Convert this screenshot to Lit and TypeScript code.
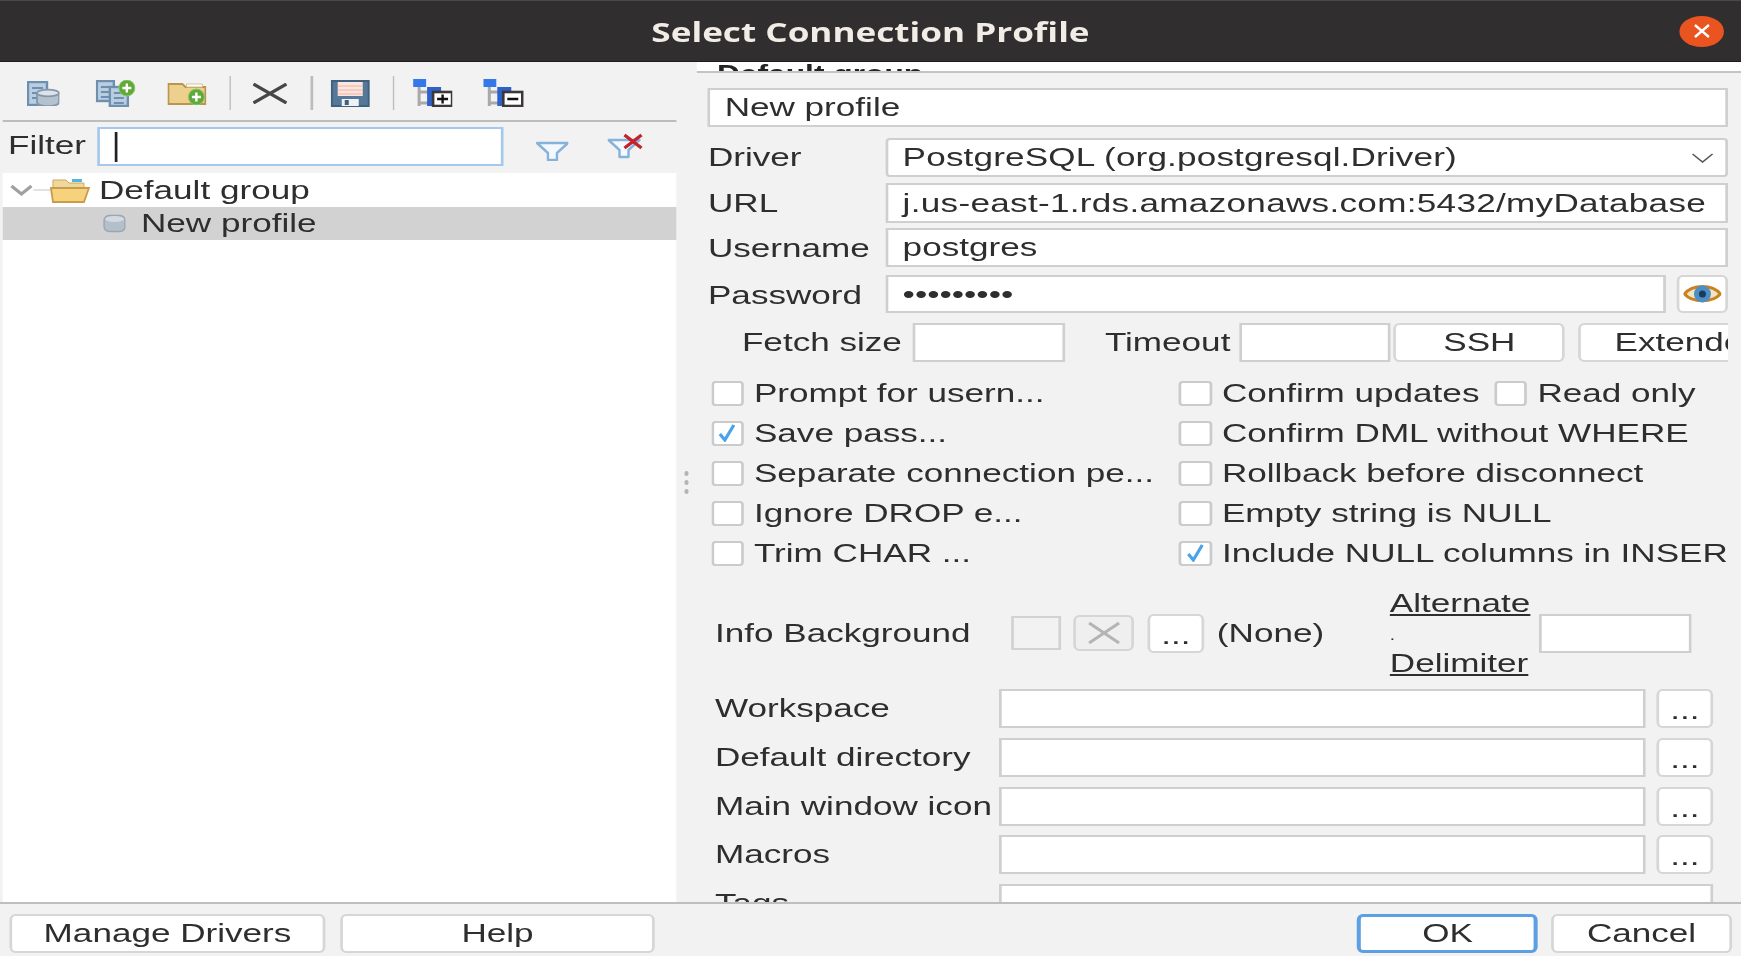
import { LitElement, html, css, svg, unsafeCSS } from 'lit';
import { customElement } from 'lit/decorators.js';

// the reference is stretched sideways, so the whole stage is laid out narrow and scaled back up
const SX = 1.35;
const x = (n: number) => unsafeCSS(`${(n / SX).toFixed(3)}px`);

const icon = (w: number, h: number, body: unknown) => html`
  <svg width=${w / SX} height=${h} viewBox="0 0 ${w} ${h}" preserveAspectRatio="none">${body}</svg>
`;

const db = (cx: number, cy: number, rx: number, h: number) => svg`
  <path d="M${cx - rx} ${cy}v${h}c0 ${rx * 0.5} ${rx * 2} ${rx * 0.5} ${rx * 2} 0v${-h}z" fill="#b4c2cf" stroke="#8597a9" stroke-width="1.8"/>
  <ellipse cx=${cx} cy=${cy} rx=${rx} ry=${rx * 0.3} fill="#dbe2e9" stroke="#8597a9" stroke-width="1.8"/>
`;

const plusBadge = (cx: number, cy: number) => svg`
  <circle cx=${cx} cy=${cy} r="8" fill="#5fa83a" stroke="#8cc96c"/>
  <path d="M${cx - 4.500} ${cy}h9M${cx} ${cy - 4.500}v9" stroke="#fff" stroke-width="2.4"/>
`;

const doc = (dx: number, dy: number, w: number, h: number) => svg`
  <rect x=${dx} y=${dy} width=${w} height=${h} fill="#b9cee1" stroke="#6f8fae" stroke-width="2.4"/>
  <path d="M${dx + 4} ${dy + 6}h${w - 8}M${dx + 4} ${dy + 11}h${w - 8}M${dx + 4} ${dy + 16}h${w - 8}" stroke="#6f8fae" stroke-width="1.8"/>
`;

const treeIcon = (minus: boolean) => svg`
  <rect x="0" y="0" width="13" height="8" fill="#3478ea"/>
  <path d="M6 8v19M6 13h10M6 24h10" stroke="#a9a9a9" stroke-width="3"/>
  <rect x="14" y="8" width="14" height="10" fill="#2f62c8"/>
  <rect x="14" y="18" width="14" height="9" fill="#2f62c8"/>
  <rect x="20" y="13" width="19" height="14" fill="#fff" stroke="#3c3838" stroke-width="2.6"/>
  <path d=${minus ? 'M24 20h11' : 'M24 20h11M29.5 15.500v9'} stroke="#111" stroke-width="2.4"/>
`;

const filterShape = svg`<path d="M1 2h31l-11 10v7h-9v-7z" fill="#f4f8fc" stroke="#86b2dc" stroke-width="2.4" stroke-linejoin="round"/>`;

const TOOLBAR = [
  {
    left: 24, w: 33, h: 25,
    body: svg`${doc(1, 1, 19, 23)}${db(21, 12, 11, 9)}`,
  },
  {
    left: 36, w: 40, h: 27,
    body: svg`${doc(1, 1, 17, 20)}${doc(14, 7, 18, 19)}${plusBadge(31, 8)}`,
  },
  {
    left: 32, w: 39, h: 24,
    body: svg`
      <path d="M1 3h14l3 3h20v17H1z" fill="#edcf8e" stroke="#b8964c" stroke-width="1.8"/>
      <path d="M19 3h16v3H19z" fill="#fff" stroke="#d6c190"/>
      ${plusBadge(29, 16)}`,
  },
  { sep: true, left: 22 },
  {
    left: 21, w: 35, h: 21,
    body: svg`<path d="M1 1l33 19M34 1L1 20" stroke="#474747" stroke-width="3.200"/>`,
  },
  { sep: true, left: 24 },
  {
    left: 18, w: 39, h: 27,
    body: svg`
      <path d="M1 1h37v25H1z" fill="#557899" stroke="#41607c" stroke-width="2"/>
      <rect x="7" y="2" width="25" height="14" fill="#fbe5de"/>
      <path d="M7 6h25M7 10h25M7 14h25" stroke="#f0b3a4" stroke-width="1"/>
      <rect x="11" y="19" width="17" height="7" fill="#eef2f5"/>
      <rect x="14" y="20" width="4" height="5" fill="#41607c"/>`,
  },
  { sep: true, left: 23 },
  { left: 18, w: 40, h: 28, body: treeIcon(false) },
  { left: 31, w: 40, h: 28, body: treeIcon(true) },
];

const CHECKS = [
  ['Prompt for usern...', false, 'Confirm updates', false],
  ['Save pass...', true, 'Confirm DML without WHERE', false],
  ['Separate connection pe...', false, 'Rollback before disconnect', false],
  ['Ignore DROP e...', false, 'Empty string is NULL', false],
  ['Trim CHAR ...', false, 'Include NULL columns in INSERT', true],
] as const;

@customElement('app-root')
export class AppRoot extends LitElement {
  static styles = css`
    :host {
      display: block;
      width: 1741px;
      height: 956px;
      overflow: hidden;
      background: #f2f2f2;
    }
    .stage {
      width: ${x(1741)};
      height: 956px;
      transform: scaleX(${SX});
      transform-origin: 0 0;
      filter: blur(0.45px);
      display: flex;
      flex-direction: column;
      font: 26px 'Liberation Sans', Arial, sans-serif;
      color: #2e2e2e;
      white-space: nowrap;
      background: #f2f2f2;
    }

    .titlebar {
      height: 62px;
      flex: none;
      display: grid;
      grid-template-columns: 1fr auto 1fr;
      align-items: center;
      background: #302e2e;
      border-top: 1px solid #4a4848;
      box-sizing: border-box;
      border-bottom: 1px solid #1e1d1d;
    }
    .title {
      font: 700 26px 'Open Sans', 'Noto Sans', sans-serif;
      color: #f1ede6;
      padding-top: 2px;
    }
    .close {
      justify-self: end;
      margin-right: ${x(17)};
      width: ${x(44)};
      height: 31px;
      border-radius: 50%;
      background: #e95420;
      display: flex;
      align-items: center;
      justify-content: center;
    }

    .body {
      flex: 1;
      min-height: 0;
      display: flex;
    }
    .left {
      width: ${x(674)};
      margin-left: ${x(3)};
      flex: none;
      display: flex;
      flex-direction: column;
    }
    .toolbar {
      height: 54px;
      padding-top: 4px;
      flex: none;
      display: flex;
      align-items: center;
      border-bottom: 2px solid #bdbdbd;
      box-sizing: content-box;
    }
    .toolbar svg { flex: none; display: block; }
    .tool { flex: none; }
    .sep {
      flex: none;
      width: ${x(2)};
      height: 34px;
      background: #bcbcbc;
    }
    .filter {
      height: 51px;
      flex: none;
      display: flex;
      align-items: flex-start;
    }
    .filter-label {
      width: ${x(94)};
      padding-left: ${x(5)};
      box-sizing: border-box;
      margin-top: 9px;
      line-height: 28px;
    }
    .filter-input {
      width: ${x(407)};
      height: 39px;
      margin-top: 5px;
      box-sizing: border-box;
      background: #fff;
      border: 2px solid #a6c8ea;
      display: flex;
      align-items: center;
      padding-left: ${x(15)};
    }
    .caret {
      width: ${x(2.500)};
      height: 30px;
      background: #222;
    }
    .filter-a { margin: 15px 0 0 ${x(32)}; }
    .filter-b { margin: 11px 0 0 ${x(39)}; }
    .tree {
      flex: 1;
      background: #fff;
      line-height: 33px;
    }
    .node {
      height: 34px;
      display: flex;
      align-items: center;
    }
    .node svg { flex: none; }
    .node.group svg.chev { margin-left: ${x(7)}; }
    .node.group svg.folder { margin-left: ${x(-3)}; }
    .node.group span { margin-left: ${x(9)}; }
    .node.item { background: #d2d2d2; height: 33px; }
    .node.item svg { margin-left: ${x(99)}; }
    .node.item span { margin-left: ${x(15)}; }

    .splitter {
      width: ${x(19)};
      flex: none;
      display: flex;
      flex-direction: column;
      align-items: center;
      justify-content: center;
      gap: 4px;
    }
    .splitter i {
      width: ${x(5)};
      height: 5px;
      border-radius: 50%;
      background: #b4b4b4;
    }

    .right {
      flex: 1;
      min-width: 0;
      overflow: hidden;
      padding: 0 ${x(13)} 0 ${x(12)};
      background: #f2f2f2;
    }
    .groupname {
      height: 9px;
      margin: 0 ${x(-13)} 0 ${x(-12)};
      padding-left: ${x(21)};
      background: #fff;
      border-bottom: 2px solid #c4c4c4;
      font-weight: 700;
      font-size: 23.500px;
      line-height: 24px;
      color: #222;
      overflow: hidden;
    }

    .field {
      height: 39px;
      box-sizing: border-box;
      display: flex;
      align-items: center;
      padding-left: ${x(14)};
      background: #fff;
      border: 2px solid #cfcfcf;
      overflow: hidden;
    }
    .name { margin-top: 15px; }
    .conn {
      display: grid;
      grid-template-columns: ${x(178)} 1fr;
      align-items: center;
    }
    .combo {
      border-radius: ${x(4)} / 4px;
      justify-content: space-between;
      padding-right: ${x(12)};
    }
    .combo span { letter-spacing: 0.12px; }
    .conn-driver { margin-top: 11px; }
    .conn-url { margin-top: 6px; }
    .conn-url .field { height: 40px; letter-spacing: 0.22px; }
    .conn-user { margin-top: 5px; }
    .conn-user > span, .conn-pass > span { padding-top: 2px; }
    .conn-pass { margin-top: 8px; }
    .pass-wrap {
      display: flex;
      justify-content: space-between;
    }
    .pass-wrap .field { width: ${x(780)}; height: 38px; }
    .btn {
      box-sizing: border-box;
      background: #fff;
      border: 2px solid #d6d6d6;
      border-radius: ${x(6)} / 6px;
      display: flex;
      align-items: center;
      justify-content: center;
      color: #2e2e2e;
      flex: none;
    }
    .eye { width: ${x(51)}; height: 38px; }

    .limits {
      margin-top: 10px;
      height: 39px;
      width: ${x(1020)};
      overflow: hidden;
      display: flex;
      align-items: center;
    }
    .limits .lbl { flex: none; }
    .lbl-fetch { width: ${x(171)}; margin-left: ${x(34)}; }
    .lbl-timeout { width: ${x(134)}; margin-left: ${x(40)}; }
    .num { width: ${x(152)}; flex: none; padding: 0; }
    .ssh { width: ${x(171)}; height: 39px; margin-left: ${x(3)}; }
    .ext {
      width: ${x(300)};
      height: 39px;
      margin-left: ${x(13)};
      justify-content: flex-start;
      padding-left: ${x(34)};
    }

    .checks {
      margin-top: 11px;
      margin-left: ${x(3)};
      width: ${x(1017)};
      overflow: hidden;
      display: grid;
      grid-template-columns: ${x(468)} 1fr;
      grid-auto-rows: 40px;
      align-items: center;
    }
    .cell { display: flex; align-items: center; }
    .check {
      display: flex;
      align-items: center;
      gap: ${x(10)};
    }
    .box {
      width: ${x(33)};
      height: 25px;
      flex: none;
      box-sizing: border-box;
      background: #fff;
      border: 2px solid #cbcbcb;
      border-radius: ${x(4)} / 4px;
      display: flex;
      align-items: center;
      justify-content: center;
    }
    .readonly { margin-left: ${x(15)}; }

    .info {
      margin-top: 15px;
      padding-left: ${x(7)};
      display: flex;
      align-items: center;
      height: 90px;
    }
    .info-label { width: ${x(296)}; flex: none; }
    .swatch {
      width: ${x(50)};
      height: 34px;
      flex: none;
      box-sizing: border-box;
      border: 2px solid #d2d2d2;
      background: #f2f2f2;
    }
    .clear {
      width: ${x(60)};
      height: 36px;
      margin-left: ${x(13)};
      background: #efefef;
    }
    .pick {
      width: ${x(56)};
      height: 39px;
      margin-left: ${x(14)};
      align-items: flex-start;
      line-height: 39px;
    }
    .none { width: ${x(173)}; margin-left: ${x(13)}; flex: none; }
    .delim {
      width: ${x(149)};
      flex: none;
      display: flex;
      flex-direction: column;
      line-height: 30px;
    }
    .delim span { height: 30px; }
    .delim u { text-underline-offset: 2px; }
    .delim-dot { font-size: 14px; line-height: 34px; }
    .delim-input { width: ${x(153)}; padding: 0; flex: none; }

    .paths {
      margin-top: 11px;
      padding-left: ${x(7)};
      display: grid;
      grid-template-columns: ${x(273)} ${x(647)} ${x(56)};
      column-gap: ${x(11)};
      row-gap: 9.750px;
      align-items: center;
    }
    .paths .pick { margin: 0; }
    .wide { grid-column: 2 / 4; }

    .footer {
      height: 54px;
      flex: none;
      box-sizing: border-box;
      border-top: 2px solid #bebebe;
      padding: 10px ${x(9)} 0 ${x(10)};
      display: flex;
      align-items: flex-start;
      background: #f2f2f2;
    }
    .footer .btn { height: 39px; width: ${x(315)}; }
    .footer .help { margin-left: ${x(15)}; }
    .footer .ok {
      margin-left: auto;
      width: ${x(181)};
      border: 3px solid #5c9fe2;
    }
    .footer .cancel { width: ${x(181)}; margin-left: ${x(13)}; }
  `;

  private renderCheck(label: string, checked: boolean) {
    return html`
      <div class="check">
        <div class="box">
          ${checked
            ? icon(20, 18, svg`<path d="M3 10l5 6L17 1" fill="none" stroke="#4aa3ea" stroke-width="3.200"/>`)
            : ''}
        </div>
        <span>${label}</span>
      </div>
    `;
  }

  private renderToolbar() {
    return TOOLBAR.map((t) =>
      'sep' in t
        ? html`<div class="sep" style="margin-left:${(t.left as number) / SX}px"></div>`
        : html`<div class="tool" style="margin-left:${(t.left as number) / SX}px">
            ${icon(t.w as number, t.h as number, t.body)}
          </div>`
    );
  }

  render() {
    return html`
      <div class="stage">
        <header class="titlebar">
          <span></span>
          <span class="title">Select Connection Profile</span>
          <div class="close">
            ${icon(18, 14, svg`<path d="M2 1l14 12M16 1L2 13" stroke="#fff" stroke-width="2.4"/>`)}
          </div>
        </header>

        <div class="body">
          <section class="left">
            <div class="toolbar">${this.renderToolbar()}</div>
            <div class="filter">
              <span class="filter-label">Filter</span>
              <div class="filter-input"><div class="caret"></div></div>
              <div class="filter-a">${icon(33, 20, filterShape)}</div>
              <div class="filter-b">
                ${icon(37, 26, svg`
                  <g transform="translate(0 5)">${filterShape}</g>
                  <path d="M17 2l17 13M34 2L17 15" stroke="#c4222a" stroke-width="3.400"/>`)}
              </div>
            </div>
            <div class="tree">
              <div class="node group">
                <svg class="chev" width=${43 / SX} height="14" viewBox="0 0 43 14" preserveAspectRatio="none">
                  <path d="M2 3l10 8L22 3" fill="none" stroke="#a0a0a0" stroke-width="3.200"/>
                  <path d="M24 7h19" stroke="#d8d8d8" stroke-width="1.5"/>
                </svg>
                <svg class="folder" width=${40 / SX} height="25" viewBox="0 0 40 25" preserveAspectRatio="none">
                  <path d="M3 2h13l3 3h15v6H3z" fill="#f0d79c" stroke="#c9a864"/>
                  <path d="M22 1h10v3H22z" fill="#58b7d8"/>
                  <path d="M1 10h38l-5 14H3z" fill="#f6d27d" stroke="#c99c4a" stroke-width="1.800"/>
                </svg>
                <span>Default group</span>
              </div>
              <div class="node item">
                <svg width=${24 / SX} height="19" viewBox="0 0 24 19" preserveAspectRatio="none">
                  <rect x="1.500" y="1.500" width="21" height="16" rx="5" fill="#b4bfca" stroke="#99a7b5" stroke-width="1.500"/>
                  <ellipse cx="12" cy="5" rx="9.500" ry="3" fill="#d3dae1"/>
                </svg>
                <span>New profile</span>
              </div>
            </div>
          </section>

          <div class="splitter"><i></i><i></i><i></i></div>

          <section class="right">
            <div class="groupname">Default group</div>
            <div class="field name">New profile</div>

            <div class="conn conn-driver">
              <span>Driver</span>
              <div class="field combo">
                <span>PostgreSQL (org.postgresql.Driver)</span>
                ${icon(22, 10, svg`<path d="M1 1l10 8L21 1" fill="none" stroke="#555" stroke-width="1.6"/>`)}
              </div>
            </div>
            <div class="conn conn-url">
              <span>URL</span>
              <div class="field">j.us-east-1.rds.amazonaws.com:5432/myDatabase</div>
            </div>
            <div class="conn conn-user">
              <span>Username</span>
              <div class="field">postgres</div>
            </div>
            <div class="conn conn-pass">
              <span>Password</span>
              <div class="pass-wrap">
                <div class="field">•••••••••</div>
                <div class="btn eye">
                  ${icon(38, 22, svg`
                    <path d="M1 11C9 1 29 1 37 11 29 20 9 20 1 11z" fill="#f3e4c4" stroke="#c9821f" stroke-width="3"/>
                    <circle cx="19" cy="11" r="8.500" fill="#4c8fc4"/>
                    <circle cx="19" cy="11" r="3.500" fill="#1c3a5c"/>`)}
                </div>
              </div>
            </div>

            <div class="limits">
              <span class="lbl lbl-fetch">Fetch size</span>
              <div class="field num"></div>
              <span class="lbl lbl-timeout">Timeout</span>
              <div class="field num"></div>
              <div class="btn ssh">SSH</div>
              <div class="btn ext">Extended</div>
            </div>

            <div class="checks">
              ${CHECKS.map(([a, aOn, b, bOn], i) => html`
                <div class="cell">${this.renderCheck(a, aOn)}</div>
                <div class="cell">
                  ${this.renderCheck(b, bOn)}
                  ${i === 0 ? html`<div class="readonly">${this.renderCheck('Read only', false)}</div>` : ''}
                </div>
              `)}
            </div>

            <div class="info">
              <span class="info-label">Info Background</span>
              <div class="swatch"></div>
              <div class="btn clear">
                ${icon(32, 22, svg`<path d="M1 1l30 20M31 1L1 21" stroke="#b4b4b4" stroke-width="3"/>`)}
              </div>
              <div class="btn pick">...</div>
              <span class="none">(None)</span>
              <div class="delim">
                <span><u>Alternate</u></span>
                <span class="delim-dot">.</span>
                <span><u>Delimiter</u></span>
              </div>
              <div class="field delim-input"></div>
            </div>

            <div class="paths">
              ${['Workspace', 'Default directory', 'Main window icon', 'Macros'].map((label) => html`
                <span>${label}</span>
                <div class="field"></div>
                <div class="btn pick">...</div>
              `)}
              <span>Tags</span>
              <div class="field wide"></div>
            </div>
          </section>
        </div>

        <footer class="footer">
          <div class="btn">Manage Drivers</div>
          <div class="btn help">Help</div>
          <div class="btn ok">OK</div>
          <div class="btn cancel">Cancel</div>
        </footer>
      </div>
    `;
  }
}
